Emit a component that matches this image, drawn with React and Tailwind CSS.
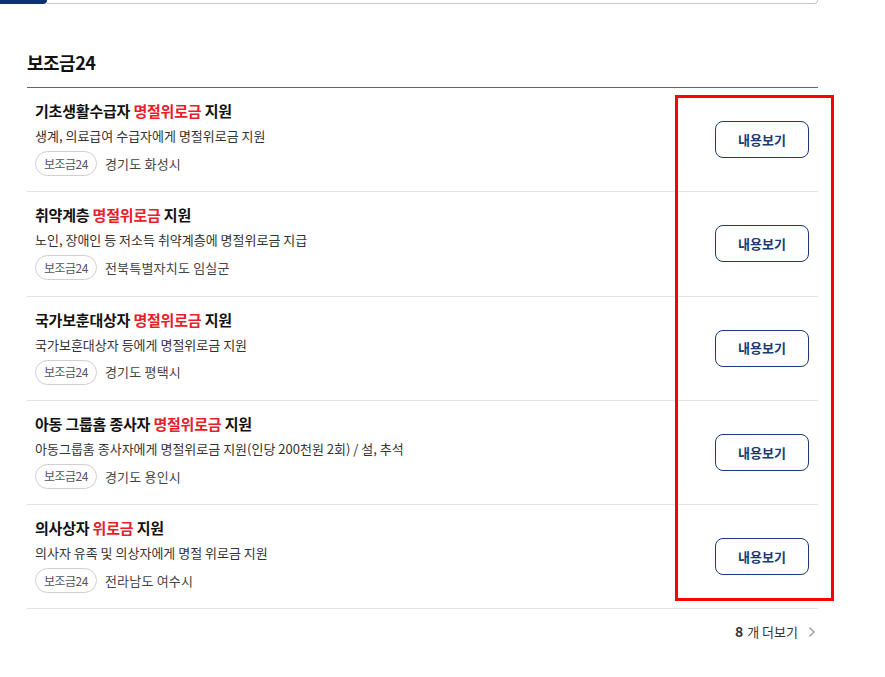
import React from "react";

const items = [
  { pre: "기초생활수급자 ", red: "명절위로금", post: " 지원", desc: "생계, 의료급여 수급자에게 명절위로금 지원", region: "경기도 화성시" },
  { pre: "취약계층 ", red: "명절위로금", post: " 지원", desc: "노인, 장애인 등 저소득 취약계층에 명절위로금 지급", region: "전북특별자치도 임실군" },
  { pre: "국가보훈대상자 ", red: "명절위로금", post: " 지원", desc: "국가보훈대상자 등에게 명절위로금 지원", region: "경기도 평택시" },
  { pre: "아동 그룹홈 종사자 ", red: "명절위로금", post: " 지원", desc: "아동그룹홈 종사자에게 명절위로금 지원(인당 200천원 2회) / 설, 추석", region: "경기도 용인시" },
  { pre: "의사상자 ", red: "위로금", post: " 지원", desc: "의사자 유족 및 의상자에게 명절 위로금 지원", region: "전라남도 여수시" },
];

export default function App() {
  return (
    <div
      className="relative w-[885px] h-[677px] bg-white overflow-hidden"
      style={{ fontFamily: '"Noto Sans CJK KR", "Noto Sans", sans-serif' }}
    >
      <div className="flex h-[4px] w-[818px]">
        <div className="w-[47px] h-full bg-[#0c3276] rounded-br-[6px]" />
        <div className="flex-1 h-full border-b border-r border-[#c8c8c8] rounded-br-[10px]" />
      </div>

      <div className="ml-[27px] w-[791px]">
        <h2 className="mt-[46px] text-[18px] leading-[24px] font-bold text-[#111] tracking-[-0.5px]">보조금24</h2>
        <div className="mt-[13px] h-px bg-[#666]" />

        <ul>
          {items.map((it, i) => (
            <li key={i} className="flex items-center border-b border-[#e2e2e2] pl-[8px] pr-[9px]">
              <div className="flex-1 pt-[13px] pb-[15.25px]">
                <div className="text-[15px] leading-[20px] font-bold text-[#111] tracking-[-0.2px]">
                  {it.pre}
                  <span className="text-[#e8202a]">{it.red}</span>
                  {it.post}
                </div>
                <div className="mt-[5px] text-[13px] leading-[20px] text-[#333]">{it.desc}</div>
                <div className="mt-[5px] flex items-center h-[25px]">
                  <span className="h-[25px] px-[8px] flex items-center rounded-full border border-[#cfcfcf] text-[12px] text-[#555] tracking-[-0.5px]">
                    보조금24
                  </span>
                  <span className="ml-[8px] text-[13px] text-[#444] tracking-[0.2px]">{it.region}</span>
                </div>
              </div>
              <button className="w-[94px] h-[37px] rounded-[8px] border border-[#1b3a73] text-[13px] font-bold text-[#1b3a73] bg-white">
                내용보기
              </button>
            </li>
          ))}
        </ul>

        <div className="mt-[12px] flex items-center justify-end pr-[2px] text-[13px] text-[#333]">
          <span className="font-bold text-[14px]">8</span>
          <span className="ml-[4px]">개 더보기</span>
          <svg className="ml-[10px]" width="8" height="12" viewBox="0 0 8 12" fill="none">
            <path d="M1.5 1.5 L6 6 L1.5 10.5" stroke="#9a9a9a" strokeWidth="1.4" />
          </svg>
        </div>
      </div>

      <div className="absolute left-[675px] top-[95px] w-[159px] h-[506px] border-[3px] border-[#ff0000]" />
    </div>
  );
}
